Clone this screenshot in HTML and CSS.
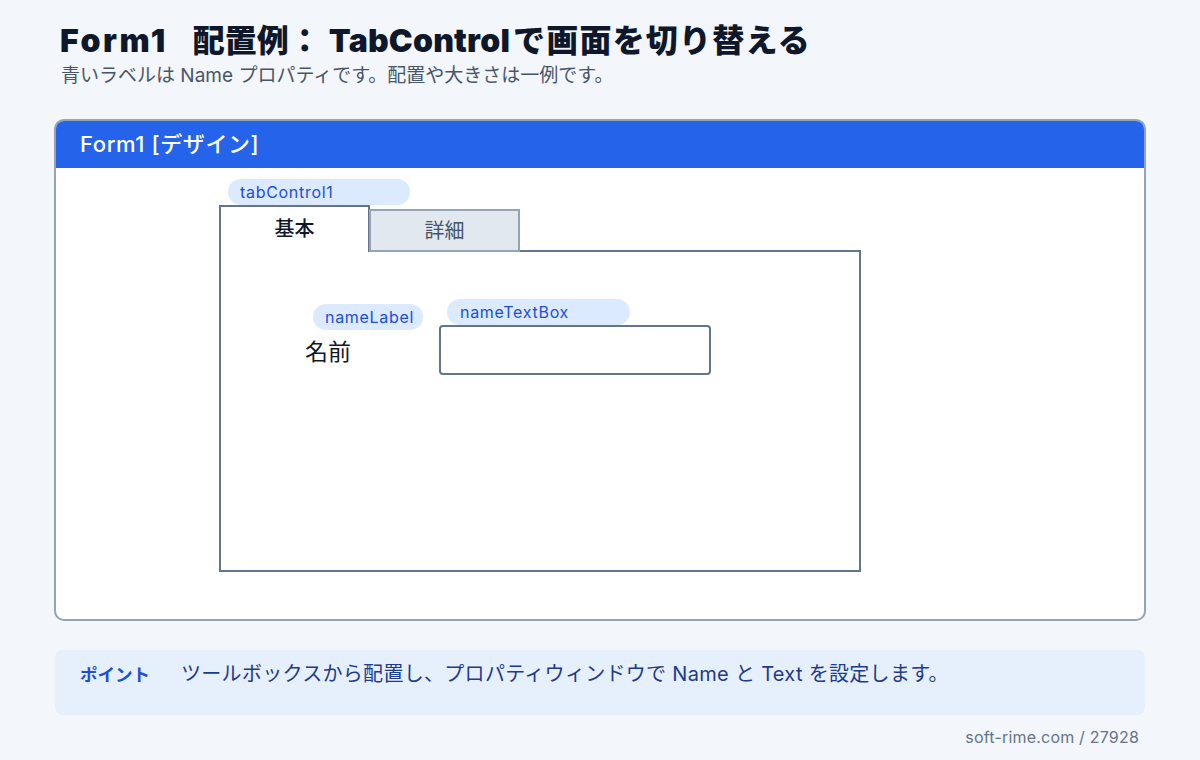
FILE: index.html
```html
<!DOCTYPE html>
<html lang="ja">
<head>
<meta charset="utf-8">
<title>Form1 配置例</title>
<link rel="stylesheet" href="styles.css">
</head>
<body>
<div class="page">
  <header class="top">
    <h1 class="title"><span class="lt-wide">Form1</span><span class="gap"></span>配置例：<span class="lt">TabControl</span><span class="jp">で画面を切り替える</span></h1>
    <p class="subtitle">青いラベルは Name プロパティです。配置や大きさは一例です。</p>
  </header>

  <section class="window">
    <div class="window-bar">Form1 [デザイン]</div>
    <div class="window-body">
      <div class="tabcontrol">
        <span class="pill pill-tab">tabControl1</span>
        <div class="tabs">
          <div class="tab tab-active">基本</div>
          <div class="tab tab-inactive">詳細</div>
        </div>
        <div class="panel">
          <div class="field-label">
            <span class="pill pill-label">nameLabel</span>
            <span class="label-text">名前</span>
          </div>
          <div class="field-input">
            <span class="pill pill-textbox">nameTextBox</span>
            <div class="textbox"></div>
          </div>
        </div>
      </div>
    </div>
  </section>

  <section class="point">
    <span class="point-head">ポイント</span>
    <span class="point-text">ツールボックスから配置し、プロパティウィンドウで Name と Text を設定します。</span>
  </section>

  <footer class="footer">soft-rime.com / 27928</footer>
</div>
</body>
</html>
```

FILE: styles.css
```css
* { box-sizing: border-box; }

html, body {
  margin: 0;
  padding: 0;
  background: #f3f6fa;
  font-family: "Inter", "Noto Sans CJK JP", sans-serif;
  color: #0f172a;
}

.page {
  width: 1200px;
  height: 760px;
  padding: 0 54px;
}

.top {
  height: 119px;
  padding: 20px 0 0 6px;
}

.title {
  margin: 0;
  font-size: 32px;
  font-weight: 900;
  line-height: 42px;
  color: #0f172a;
  white-space: nowrap;
}

.title .lt-wide {
  letter-spacing: 2.5px;
}

.title .lt {
  letter-spacing: 0.2px;
  margin-left: 8px;
}

.title .jp {
  letter-spacing: 1.2px;
  margin-left: 3px;
}

.title .gap {
  display: inline-block;
  width: 25px;
}

.subtitle {
  margin: 1px 0 0 1px;
  font-size: 19px;
  line-height: 26px;
  color: #475569;
}

.window {
  width: 1092px;
  height: 502px;
  border: 2px solid #94a3b8;
  border-radius: 10px;
  background: #ffffff;
  overflow: hidden;
}

.window-bar {
  height: 47px;
  background: #2563eb;
  color: #ffffff;
  font-size: 22px;
  font-weight: 500;
  letter-spacing: 0.6px;
  line-height: 47px;
  padding-left: 24px;
}

.window-body {
  padding: 11px 0 0 163px;
}

.tabcontrol {
  width: 642px;
}

.pill {
  display: block;
  height: 26px;
  border-radius: 13px;
  background: #dbeafe;
  color: #1d4ed8;
  font-size: 16px;
  letter-spacing: 0.7px;
  line-height: 26px;
  padding-left: 12px;
}

.pill-tab {
  width: 182px;
  margin-left: 9px;
}

.tabs {
  display: flex;
  align-items: flex-end;
  position: relative;
  z-index: 1;
  margin-bottom: -2px;
}

.tab {
  width: 151px;
  text-align: center;
  font-size: 20px;
}

.tab-active {
  height: 47px;
  line-height: 45px;
  background: #ffffff;
  border: 2px solid #64748b;
  border-bottom: none;
  font-weight: 500;
  color: #0f172a;
}

.tab-inactive {
  height: 43px;
  line-height: 40px;
  margin-left: -1px;
  background: #e2e8f0;
  border: 2px solid #94a3b8;
  color: #475569;
}

.panel {
  height: 322px;
  border: 2px solid #64748b;
  background: #ffffff;
  display: flex;
  align-items: flex-start;
  padding: 47px 0 0 84px;
}

.field-label {
  width: 134px;
  margin-top: 5px;
}

.pill-label {
  width: 110px;
  margin-left: 8px;
}

.label-text {
  display: block;
  margin-top: 7px;
  font-size: 23px;
  line-height: 30px;
  color: #0f172a;
}

.field-input {
  width: 272px;
}

.pill-textbox {
  width: 183px;
  margin-left: 8px;
  padding-left: 13px;
}

.textbox {
  height: 50px;
  border: 2px solid #64748b;
  border-radius: 4px;
  background: #ffffff;
}

.point {
  margin-top: 29px;
  margin-left: 1px;
  width: 1090px;
  height: 65px;
  background: #e6effc;
  border-radius: 8px;
  padding: 8px 0 0 25px;
  display: flex;
  align-items: baseline;
}

.point-head {
  width: 101px;
  font-size: 17.5px;
  font-weight: 700;
  color: #1d4ed8;
}

.point-text {
  font-size: 20px;
  letter-spacing: 0.3px;
  color: #1e3a8a;
}

.footer {
  margin-top: 12px;
  padding-right: 7px;
  text-align: right;
  font-size: 16px;
  letter-spacing: 0.2px;
  line-height: 20px;
  color: #64748b;
}
```
